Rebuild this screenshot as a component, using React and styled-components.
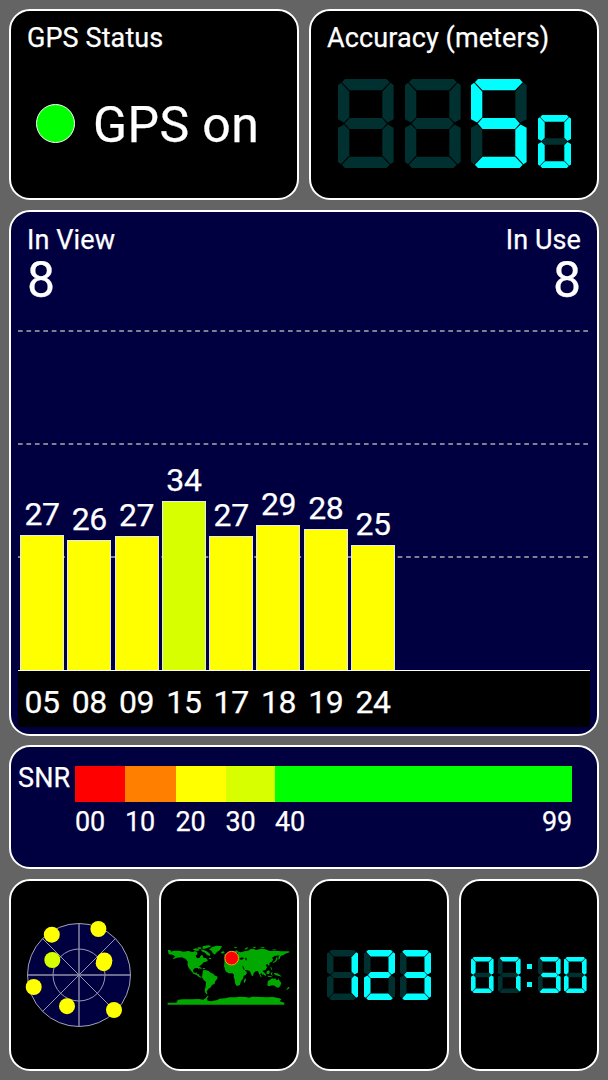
import React from "react";
import styled, { createGlobalStyle } from "styled-components";

const GlobalStyle = createGlobalStyle`
  body { margin: 0; background: #646464; }
  * { box-sizing: border-box; }
`;

const LIT = "#00ffff";
const UNLIT = "#003030";
const NAVY = "#000040";

const Screen = styled.main`
  width: 608px;
  height: 1080px;
  padding: 9px;
  display: grid;
  grid-template-rows: 191px 525px 124px 192px;
  row-gap: 10px;
  background: #646464;
  color: #fff;
  font-family: Roboto, "Liberation Sans", sans-serif;
  -webkit-text-stroke: 0.25px #fff;
`;

const Row = styled.div`
  display: grid;
  grid-template-columns: repeat(${(p) => p.$columns}, 1fr);
  column-gap: 10px;
`;

const Panel = styled.section`
  border: 2px solid #fff;
  border-radius: 21px;
  background: ${(p) => (p.$navy ? NAVY : "#000")};
  display: flex;
  flex-direction: column;
  min-width: 0;
  padding: ${(p) => p.$pad || "0"};
`;

const ChartPanel = styled(Panel)`
  margin-bottom: -1px;
`;

const Title = styled.div`
  font-size: 27px;
  line-height: 30px;
  letter-spacing: 0.1px;
  white-space: nowrap;
`;

const StatusLine = styled.div`
  display: flex;
  align-items: center;
  gap: 18px;
  margin: 41px 0 0 9px;
`;

const Lamp = styled.span`
  width: 39px;
  height: 39px;
  border: 1px solid #fff;
  border-radius: 50%;
  background: #00ff00;
`;

const StatusText = styled.span`
  font-size: 50px;
  line-height: 58px;
  letter-spacing: 0.4px;
  padding-top: 2px;
  margin-bottom: -1px;
`;

const Readout = styled.div`
  display: flex;
  align-items: flex-end;
  gap: 11px;
  margin: 26px 0 0 11px;
`;

const Counters = styled.div`
  display: flex;
  justify-content: space-between;
  height: 105px;
  padding: 13px 16px 0;
`;

const Counter = styled.div`
  display: flex;
  flex-direction: column;
  text-align: ${(p) => p.$align || "left"};
`;

const Count = styled.span`
  font-size: 50px;
  line-height: 50px;
`;

const dash = "linear-gradient(to right, #808090 4.5px, transparent 4.5px)";

const Plot = styled.div`
  height: 354px;
  margin: 0 7px;
  padding-left: 2px;
  display: flex;
  align-items: flex-end;
  gap: 3.3px;
  border-bottom: 1px solid #fff;
  background-image: ${dash}, ${dash}, ${dash};
  background-size: 8.44px 1.5px;
  background-repeat: repeat-x;
  background-position: 0 13px, 0 126px, 0 239px;
`;

const BarColumn = styled.div`
  width: 44px;
  display: flex;
  flex-direction: column;
  text-align: center;
`;

const BarText = styled.span`
  font-size: 32px;
  line-height: 38px;
  padding-bottom: 2px;
  letter-spacing: -0.4px;
  white-space: nowrap;
`;

const Bar = styled.div`
  border: 1px solid #e8e8f0;
  border-bottom: 0;
  background: ${(p) => p.$color};
`;

const Axis = styled.div`
  height: 56px;
  margin: 0 7px;
  padding: 12px 0 0 2px;
  display: flex;
  gap: 3.3px;
  background: #000;
`;

const AxisLabel = styled(BarText)`
  width: 44px;
  text-align: center;
`;

const Scale = styled.div`
  display: grid;
  grid-template-columns: 57px 497px;
  padding: 19px 0 0 7px;
`;

const ScaleName = styled(Title)`
  line-height: 25px;
`;

const Swatches = styled.div`
  display: flex;
  height: 36px;
`;

const Swatch = styled.span`
  width: ${(p) => p.$width}px;
  background: ${(p) => p.$color};
`;

const Ticks = styled.div`
  grid-column: 2;
  display: flex;
  padding-top: 5px;
`;

const Tick = styled.span`
  width: ${(p) => p.$width}px;
  font-size: 27px;
  line-height: 30px;
  letter-spacing: -0.2px;
  white-space: nowrap;
  &:last-child { margin-left: auto; }
`;

const Tile = styled(Panel)`
  align-items: center;
  justify-content: center;
`;

const DigitRow = styled.div`
  display: flex;
  align-items: center;
  gap: ${(p) => p.$gap}px;
`;

const Colon = styled.span`
  display: flex;
  flex-direction: column;
  gap: 13px;
  margin: 0 2px;
`;

const ColonDot = styled.i`
  width: 5px;
  height: 5px;
  background: ${LIT};
`;

const Drawing = styled.svg`
  display: block;
  flex: none;
  overflow: visible;
`;

const SEGMENTS = {
  0: "abcdef", 1: "bc", 2: "abged", 3: "abgcd", 5: "afgcd", 7: "abc", "": "",
};

function Digit({ value = "", w, h, t }) {
  const W = w / t;
  const H = h / t;
  const M = H / 2;
  const shapes = {
    a: [[0.62, 0], [W - 0.62, 0], [W - 0.34, 0.28], [W - 1.02, 1], [1.02, 1], [0.34, 0.28]],
    f: [[0, 0.53], [0.27, 0.34], [1, 1.12], [1, M - 0.55], [0.53, M - 0.08], [0, M - 0.38]],
    g: [[0.6, M], [1.02, M - 0.48], [W - 1.02, M - 0.48], [W - 0.6, M], [W - 1.02, M + 0.48], [1.02, M + 0.48]],
  };
  const flipX = (s) => s.map(([x, y]) => [W - x, y]);
  const flipY = (s) => s.map(([x, y]) => [x, H - y]);
  shapes.b = flipX(shapes.f);
  shapes.e = flipY(shapes.f);
  shapes.c = flipY(shapes.b);
  shapes.d = flipY(shapes.a);
  return (
    <Drawing width={w} height={h} viewBox={`0 0 ${W} ${H}`} preserveAspectRatio="none">
      {Object.entries(shapes).map(([name, pts]) => (
        <polygon
          key={name}
          points={pts.map((p) => p.join(",")).join(" ")}
          fill={SEGMENTS[value].includes(name) ? LIT : UNLIT}
        />
      ))}
    </Drawing>
  );
}

function Radar() {
  const sats = [
    [-27.2, -40.3], [19.4, -46], [25.4, -14.6], [24.7, -11.8],
    [-45.3, 12], [-12, 31.2], [35, 35],
  ];
  return (
    <Drawing width="104" height="104" viewBox="-52 -52 104 104">
      <circle r="51.5" fill={NAVY} stroke="#b4b4c8" strokeWidth="0.9" />
      <g stroke="#a8a8c0" strokeWidth="0.9" fill="none">
        <circle r="26" />
        <path d="M-36.4-36.4L36.4 36.4M-36.4 36.4L36.4-36.4" />
        <path d="M-51.5 0H51.5M0-51.5V51.5" stroke="#9090a8" strokeWidth="1.4" />
      </g>
      {sats.map(([x, y]) => <circle key={x} cx={x} cy={y} r="8" fill="#ffff00" />)}
      <circle cx="-26.7" cy="-15" r="8" fill="#d8ff00" />
    </Drawing>
  );
}

function WorldMap() {
  return (
    <Drawing width="123" height="60" viewBox="37 46 369 180">
      <g fill="#00a800">
        <path d="M36 61h8l3 5 6-3h18l12 3 15-2 12 3 9-3 5 4 2 7-6 5 5 6 7-2 1-9 8 2 2 7 8 1 6 7-5 4-8 2-5 6-7 5-2 4 1 7-5-5-9 1-5 5 1 6 6 3 5-2-1 5 7 1 2 6 6 1-1 3-8-2-6-6-9-3-5-6-4-5-6-7-4-11 2-7-7-9-11-5-15 1-10 4-3-2 8-5-6-5-14-2z" />
        <path d="M111 60l8-4 9 1 4 5-9 2zM125 53h10l3 4-9 1zM136 59l9 2 11 5 8 8-2 5-8-3-6-7-10-4zM143 49l15-2 10 2-11 5-13 4-5-3zM160 60l8-7 14-5 17 1-3 7-4 6-8 5-7 8-6-5-5-8zM197 66l7-1 3 4-6 3-5-2zM160 84l6 1 1 4-8-2z" />
        <path d="M142 122l8-1 9 3 7 6 7 2 3 5 10 4-2 8-5 5-2 8-8 4-5 8-6 3-1 4-4 3 1 5 2 3-4 1-4-5-1-8 3-9 1-14-7-6-5-8 1-9z" />
        <path d="M124 111l8 1 8 4-5 1-11-4zM142 115l7 1-2 3-6-1z" />
        <path transform="translate(4 0)" d="M203 107l7-6 11-1 8 1 9 4 10 0 4 3 4 9 5 8 8 0-2 6-7 7-2 9-6 8-3 10-5 3-6 0-4-8-1-10-3-8 1-7-5-4-11 0-8-5-3-6z" />
        <path d="M268 146l3 2-2 9-4 3-1-6z" />
        <path transform="translate(10.3 0) scale(0.95 1)" d="M207 87h8l4-4 6-3-1-5 8-2 4-7 8-4 7 4 7 2 11-3 12-2 8-5 11-1 5 4 17-4 14 2 13 5 20-1 16 2h25l2 3-13 4-6 4-9 3-3 8-5 3 1-8 3-5-15 2-8 5 3 6-5 7-7 3 1 6-4 2-3-5-5 3 4 7-5 8-10 3 4 7-3 5-4-5-4 2 5 9-3 1-5-10-4-9-7 1-6 5-2 8-4 1-6-14-8-3-8-1 2 5 5 3-4 6-9 5-5-4-6-12-1-5-9-1-3-6 5-3-8-3-7 3-6-4-4 5-9 4-7-1z" />
        <path d="M206 75l4-3 5 5-1 6-6 1zM233 54l8-2 5 2-7 2zM266 58l8-5 4 1-7 6zM291 52l8-1 2 3-6 1zM313 54l10-2 5 3-8 1zM349 60l10-1 2 2-7 1zM361 87l3-7 2 8-4 7-8 5-3-2 7-4z" />
        <path d="M316 122l8 5 8 8-1 4-7-4-8-8zM333 125l7-3 3 5-4 7-7-2zM334 138l12 1 5 2-12 1zM345 129l6-1-2 5 3 5-5-2zM355 130l10 1 8 5 5 5-8-2-9-2-7-5zM344 112l3 1 3 9-4-3zM358 132l3-1 1 4-4 1z" />
        <path d="M337 154l6-4 7-4 5 2 4-2 3 5 5 0 1-5 4 7 5 7-3 8-5 6-7-1-5-5-8-1-9 3-5-3 1-9zM365 171h5l-2 4zM397 172l5 1-4 5-8 4 4-5zM295 119l3 2-1 4-3-1z" />
        <path d="M36 219h26l5-9 14-1h28l20-1 14 2 8-6 5-6 3 1-5 8 2 6 10 2 19-4 6-4 18-1 13-3h19l9-2 20 1 10 2 10-3 24 1 19 1 18-1 18 3 8 4-5 6 14 4v6H36z" />
      </g>
      <g fill="#000">
        <path d="M127 68l7-1 6 4-3 6-7 7-7-2-3-5 7-4zM235 84l5 2 7 6-5 1-4-5-7 1zM252 86l7-3 6 3-6 4-7-1zM268 84l4 0 2 8-4 0zM242 72l5-4-1 7-5 2zM259 106l5 7 3 7-3 0z" />
      </g>
      <circle cx="228" cy="85.5" r="20.5" fill="#ff0000" stroke="#ff9c18" strokeWidth="3" />
    </Drawing>
  );
}

const satellites = [
  ["05", 27, 135], ["08", 26, 130], ["09", 27, 134], ["15", 34, 169],
  ["17", 27, 134], ["18", 29, 145], ["19", 28, 141], ["24", 25, 125],
];

const scale = [
  ["00", "#ff0000", 50], ["10", "#ff8000", 50.5], ["20", "#ffff00", 50],
  ["30", "#d8ff00", 49.5], ["40", "#00ff00", 296.5],
];

export default function App() {
  const big = { w: 55.6, h: 89, t: 11.3 };
  const mid = { w: 31, h: 50, t: 6.5 };
  const small = { w: 22.6, h: 36, t: 4.6 };
  return (
    <>
      <GlobalStyle />
      <Screen>
        <Row $columns={2}>
          <Panel $pad="12px 16px">
            <Title>GPS Status</Title>
            <StatusLine>
              <Lamp />
              <StatusText>GPS on</StatusText>
            </StatusLine>
          </Panel>
          <Panel $pad="12px 16px">
            <Title>Accuracy (meters)</Title>
            <Readout>
              <Digit {...big} />
              <Digit {...big} />
              <Digit {...big} value="5" />
              <Digit w={33} h={53} t={6.7} value="0" />
            </Readout>
          </Panel>
        </Row>

        <ChartPanel $navy>
          <Counters>
            <Counter>
              <Title>In View</Title>
              <Count>8</Count>
            </Counter>
            <Counter $align="right">
              <Title>In Use</Title>
              <Count>8</Count>
            </Counter>
          </Counters>
          <Plot>
            {satellites.map(([id, snr, height]) => (
              <BarColumn key={id}>
                <BarText>{snr}</BarText>
                <Bar $color={snr >= 30 ? "#d8ff00" : "#ffff00"} style={{ height }} />
              </BarColumn>
            ))}
          </Plot>
          <Axis>
            {satellites.map(([id]) => <AxisLabel key={id}>{id}</AxisLabel>)}
          </Axis>
        </ChartPanel>

        <Panel $navy>
          <Scale>
            <ScaleName>SNR</ScaleName>
            <Swatches>
              {scale.map(([label, color, width]) => (
                <Swatch key={label} $color={color} $width={width} />
              ))}
            </Swatches>
            <Ticks>
              {scale.map(([label, , width]) => (
                <Tick key={label} $width={Math.min(width, 60)}>{label}</Tick>
              ))}
              <Tick>99</Tick>
            </Ticks>
          </Scale>
        </Panel>

        <Row $columns={4}>
          <Tile><Radar /></Tile>
          <Tile><WorldMap /></Tile>
          <Tile>
            <DigitRow $gap={5.5}>
              <Digit {...mid} value="1" />
              <Digit {...mid} value="2" />
              <Digit {...mid} value="3" />
            </DigitRow>
          </Tile>
          <Tile>
            <DigitRow $gap={4}>
              <Digit {...small} value="0" />
              <Digit {...small} value="7" />
              <Colon><ColonDot /><ColonDot /></Colon>
              <Digit {...small} value="3" />
              <Digit {...small} value="0" />
            </DigitRow>
          </Tile>
        </Row>
      </Screen>
    </>
  );
}
